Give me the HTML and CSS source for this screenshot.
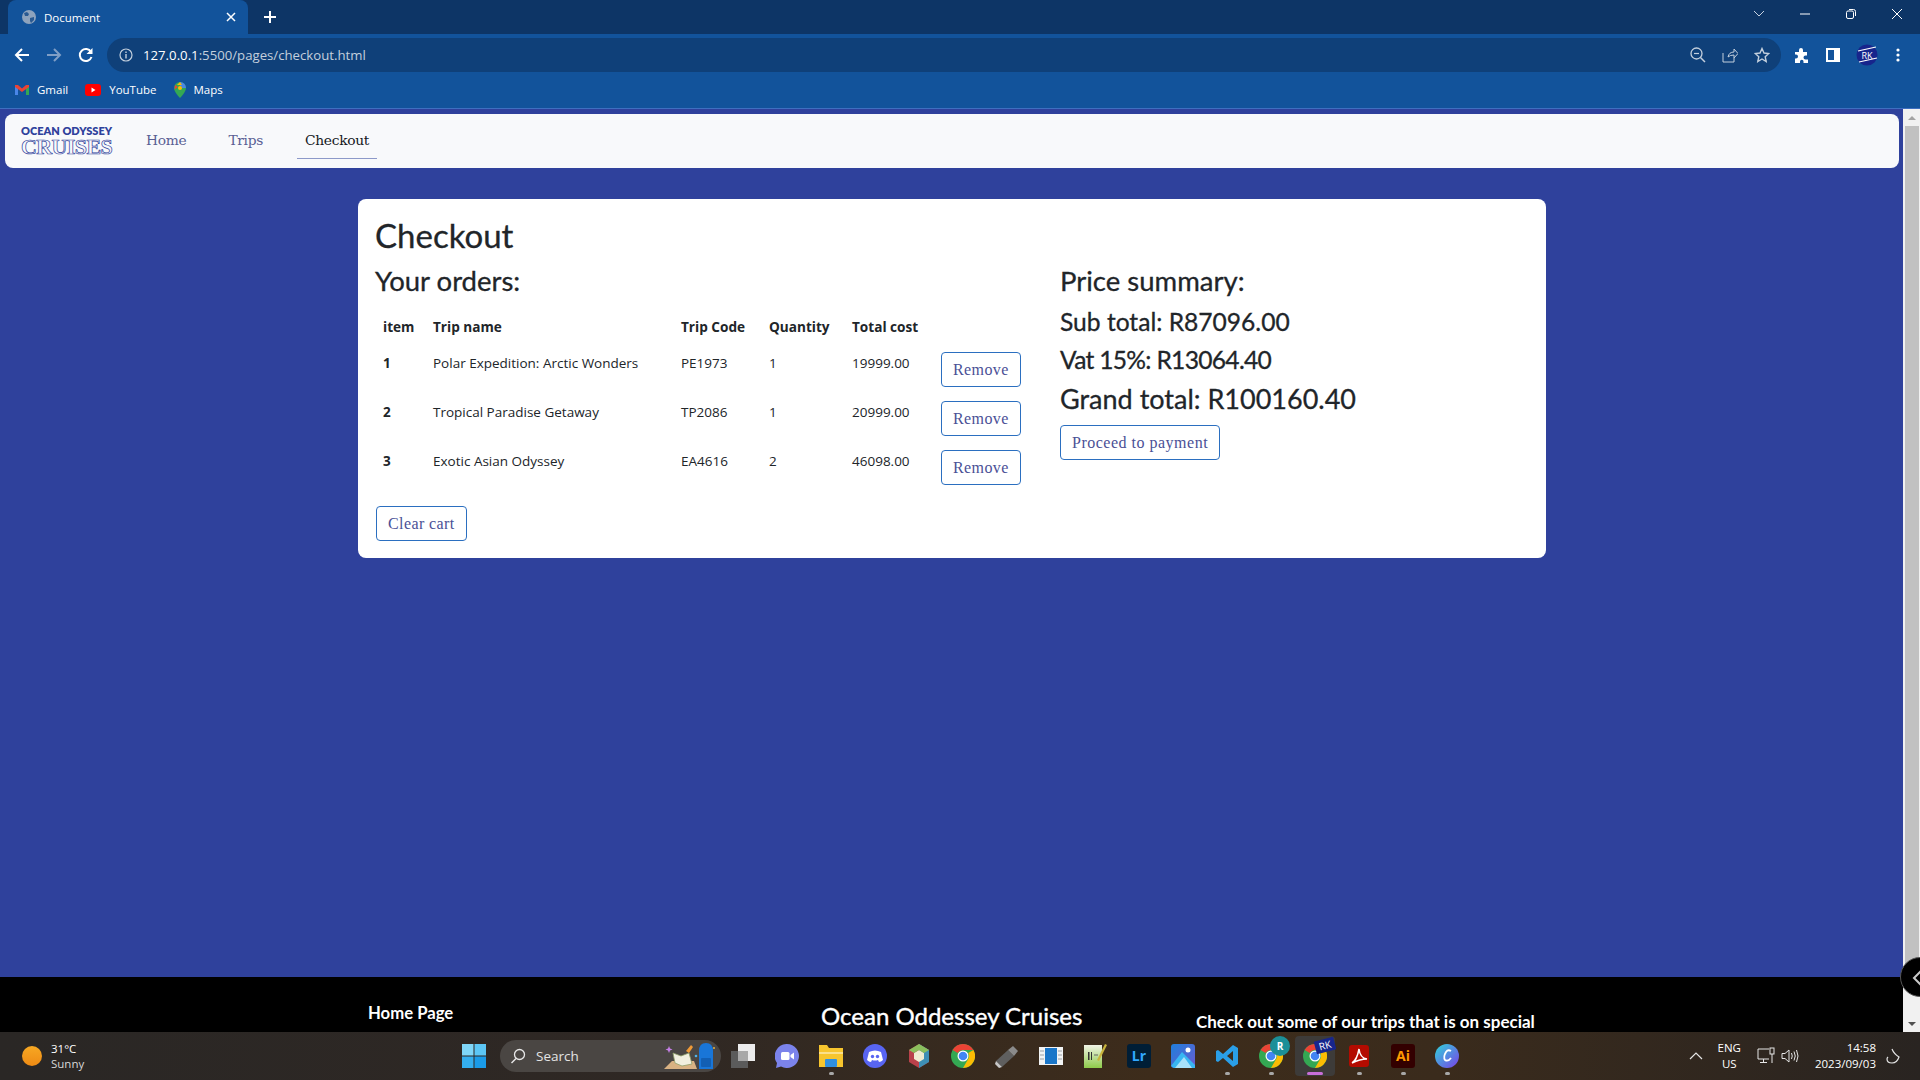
FILE: index.html
```html
<!DOCTYPE html>
<html lang="en">
<head>
    <meta charset="UTF-8">
    <meta name="viewport" content="width=device-width, initial-scale=1.0">
    <title>Document</title>
    <link rel="stylesheet" href="styles.css">
</head>
<body>

    <!-- browser frame -->
    <div class="tabstrip">
        <div class="tab">
            <svg class="tab-globe" width="16" height="16" viewBox="0 0 16 16"><circle cx="8" cy="8" r="7" fill="#8ea3bd"/><path d="M3 4l3-1 2 2-1 2-3 0zM9 9l4-1 0 3-3 3-1-2z" fill="#2a5a92"/></svg>
            <span class="tab-title">Document</span>
            <svg class="tab-close" width="10" height="10" viewBox="0 0 10 10"><path d="M1 1l8 8M9 1l-8 8" stroke="#fff" stroke-width="1.5"/></svg>
        </div>
        <svg class="tab-new" width="14" height="14" viewBox="0 0 14 14"><path d="M7 1v12M1 7h12" stroke="#fff" stroke-width="2"/></svg>
        <div class="win-controls">
            <svg width="12" height="8" viewBox="0 0 12 8"><path d="M1 1l5 5 5-5" fill="none" stroke="#c6d2e0" stroke-width="1"/></svg>
            <svg width="12" height="12" viewBox="0 0 12 12"><path d="M1 6h10" stroke="#fff" stroke-width="1"/></svg>
            <svg width="12" height="12" viewBox="0 0 12 12"><rect x="1.5" y="3" width="7" height="7.5" rx="1.5" fill="none" stroke="#fff"/><path d="M4 1.5h4.500q2 0 2 2v4.500" fill="none" stroke="#fff"/></svg>
            <svg width="12" height="12" viewBox="0 0 12 12"><path d="M1 1l10 10M11 1l-10 10" stroke="#fff" stroke-width="1"/></svg>
        </div>
    </div>

    <div class="toolbar">
        <svg class="nav-btn" width="16" height="16" viewBox="0 0 16 16"><path d="M15 8H2M8 2L2 8l6 6" fill="none" stroke="#fff" stroke-width="2"/></svg>
        <svg class="nav-btn" width="16" height="16" viewBox="0 0 16 16"><path d="M1 8h13M8 2l6 6-6 6" fill="none" stroke="#7f9ec6" stroke-width="2"/></svg>
        <svg class="nav-btn" width="16" height="16" viewBox="0 0 16 16"><path d="M13.500 10a6 6 0 1 1-.5-5" fill="none" stroke="#fff" stroke-width="2"/><path d="M14.500 1v6h-6z" fill="#fff"/></svg>
        <div class="omnibox">
            <svg width="14" height="14" viewBox="0 0 14 14"><circle cx="7" cy="7" r="6" fill="none" stroke="#c3cfdd" stroke-width="1.2"/><path d="M7 6v4.500M7 3.500v1.500" stroke="#c3cfdd" stroke-width="1.400"/></svg>
            <span class="url"><b>127.0.0.1</b>:5500/pages/checkout.html</span>
            <div class="omni-icons">
                <svg width="16" height="16" viewBox="0 0 16 16"><circle cx="6.500" cy="6.500" r="5.500" fill="none" stroke="#c3cfdd" stroke-width="1.300"/><path d="M10.500 10.500l4.500 4.500" stroke="#c3cfdd" stroke-width="1.500"/><path d="M4 6.500h5" stroke="#c3cfdd" stroke-width="1.200"/></svg>
                <svg width="16" height="16" viewBox="0 0 16 16"><path d="M1 6v9h11v-4M6 10q1-5 6-5V2l4 4.500L12 11V8q-4 0-6 2z" fill="none" stroke="#c3cfdd" stroke-width="1"/></svg>
                <svg width="16" height="16" viewBox="0 0 16 16"><path d="M8 1.500l2 4.500 4.800.5-3.600 3.200 1 4.800L8 12l-4.200 2.500 1-4.800L1.200 6.500 6 6z" fill="none" stroke="#c3cfdd" stroke-width="1.400"/></svg>
            </div>
        </div>
        <div class="toolbar-end">
            <svg width="16" height="16" viewBox="0 0 16 16"><path d="M1 5h4V3a2 2 0 0 1 4 0v2h4v3.500h-1.500a2 2 0 0 0 0 4H14V16H9.500v-1.500a1.700 1.700 0 0 0-3.500 0V16H1v-4.500h1a2 2 0 0 0 0-4H1z" fill="#fff"/></svg>
            <svg width="14" height="14" viewBox="0 0 14 14"><path d="M0 0h14v14H0zM2 2v10h6V2z" fill="#fff" fill-rule="evenodd"/></svg>
            <svg width="22" height="22" viewBox="0 0 22 22"><circle cx="11" cy="11" r="10.500" fill="#17258c"/><path d="M2 7l18-4M3 18l18-4" stroke="#fff" stroke-width="1.200"/><text x="11" y="15" text-anchor="middle" class="avatar-text">RK</text></svg>
            <svg class="menu-dots" width="4" height="14" viewBox="0 0 4 14"><circle cx="2" cy="2" r="1.600" fill="#fff"/><circle cx="2" cy="7" r="1.600" fill="#fff"/><circle cx="2" cy="12" r="1.600" fill="#fff"/></svg>
        </div>
    </div>

    <div class="bookmarks">
        <a class="bookmark">
            <svg width="14" height="11" viewBox="0 0 14 11"><path d="M0 1v10h3V4z" fill="#4a86e8"/><path d="M14 1v10h-3V4z" fill="#34a853"/><path d="M0 1l3 0 4 3.500L11 1l3 0 0 2-7 5-7-5z" fill="#ea4335"/></svg>
            Gmail
        </a>
        <a class="bookmark">
            <svg width="16" height="12" viewBox="0 0 16 12"><rect width="16" height="12" rx="3" fill="#f00"/><path d="M6.500 3.500v5l4-2.500z" fill="#fff"/></svg>
            YouTube
        </a>
        <a class="bookmark">
            <svg width="12" height="16" viewBox="0 0 12 16"><path d="M6 0a6 6 0 0 1 6 6c0 4-6 10-6 10S0 10 0 6a6 6 0 0 1 6-6z" fill="#34a853"/><path d="M6 0a6 6 0 0 1 6 6L8 6a2 2 0 0 0-2-2z" fill="#4a86e8"/><path d="M1 3l3 2-3.500 2.500z" fill="#ea4335"/><path d="M6 0L8 3 3 3z" fill="#fbbc04"/><circle cx="6" cy="6" r="2" fill="#fbbc04"/></svg>
            Maps
        </a>
    </div>

    <!-- page -->
    <div class="viewport">
        <div class="page">
            <nav class="navbar">
                <div class="logo">
                    <span class="logo-top">OCEAN ODYSSEY</span>
                    <span class="logo-bottom">CRUISES</span>
                </div>
                <a class="nav-link">Home</a>
                <a class="nav-link">Trips</a>
                <a class="nav-link active">Checkout</a>
            </nav>

            <main class="main">
                <section class="card">
                    <h1>Checkout</h1>
                    <div class="card-cols">
                        <div class="orders">
                            <h2>Your orders:</h2>
                            <table>
                                <thead>
                                    <tr>
                                        <th class="col-item">item</th>
                                        <th class="col-name">Trip name</th>
                                        <th class="col-code">Trip Code</th>
                                        <th class="col-qty">Quantity</th>
                                        <th class="col-total">Total cost</th>
                                        <th></th>
                                    </tr>
                                </thead>
                                <tbody>
                                    <tr>
                                        <th>1</th>
                                        <td>Polar Expedition: Arctic Wonders</td>
                                        <td>PE1973</td>
                                        <td>1</td>
                                        <td>19999.00</td>
                                        <td><button class="btn">Remove</button></td>
                                    </tr>
                                    <tr>
                                        <th>2</th>
                                        <td>Tropical Paradise Getaway</td>
                                        <td>TP2086</td>
                                        <td>1</td>
                                        <td>20999.00</td>
                                        <td><button class="btn">Remove</button></td>
                                    </tr>
                                    <tr>
                                        <th>3</th>
                                        <td>Exotic Asian Odyssey</td>
                                        <td>EA4616</td>
                                        <td>2</td>
                                        <td>46098.00</td>
                                        <td><button class="btn">Remove</button></td>
                                    </tr>
                                </tbody>
                            </table>
                            <button class="btn btn-clear">Clear cart</button>
                        </div>
                        <div class="summary">
                            <h2>Price summary:</h2>
                            <p class="sum-line">Sub total: R87096.00</p>
                            <p class="sum-line vat">Vat 15%: R13064.40</p>
                            <p class="sum-line grand">Grand total: R100160.40</p>
                            <button class="btn">Proceed to payment</button>
                        </div>
                    </div>
                </section>
            </main>

            <footer class="footer">
                <div class="foot-left">Home Page</div>
                <div class="foot-mid">Ocean Oddessey Cruises</div>
                <div class="foot-right">Check out some of our trips that is on special</div>
            </footer>
        </div>
        <div class="scrollbar">
            <span class="arrow-up"></span>
            <div class="thumb"></div>
            <span class="arrow-down"></span>
        </div>
        <div class="edge-tab">
            <svg width="10" height="16" viewBox="0 0 10 16"><path d="M9 1L2 8l7 7" fill="none" stroke="#c9c9c9" stroke-width="2"/></svg>
        </div>
    </div>

    <!-- windows taskbar -->
    <div class="taskbar">
        <div class="weather">
            <span class="sun"></span>
            <div class="weather-text">
                <span>31°C</span>
                <span class="dim">Sunny</span>
            </div>
        </div>
        <div class="task-center">
            <svg class="start" width="24" height="24" viewBox="0 0 24 24"><rect width="11.500" height="11.500" fill="#7fd6f8"/><rect x="12.500" width="11.500" height="11.500" fill="#5cc6f5"/><rect y="12.500" width="11.500" height="11.500" fill="#34aeee"/><rect x="12.500" y="12.500" width="11.500" height="11.500" fill="#1a9be8"/></svg>
            <div class="search">
                <svg width="16" height="16" viewBox="0 0 16 16"><circle cx="9.500" cy="6.500" r="5" fill="none" stroke="#e8e8e8" stroke-width="1.300"/><path d="M6 10.500L1.500 15" stroke="#e8e8e8" stroke-width="1.500"/></svg>
                <span>Search</span>
                <svg class="search-art" width="52" height="30" viewBox="0 0 52 30"><path d="M6 5l1 2.500 2.500 1-2.500 1-1 2.500-1-2.500-2.500-1 2.500-1z" fill="#c780e8"/><path d="M1 28l8-8 22 0 3 8z" fill="#d9b283"/><path d="M10 12l8 3 8-3 3 11-10 2-7-3z" fill="#f1efdf" stroke="#8fa06a" stroke-width=".8"/><path d="M23 10l5-6 2 2-4 6z" fill="#ef9a38"/><circle cx="33" cy="15" r="1.300" fill="#4fb3e8"/><path d="M36 28V10q0-8 7-8t7 8v18z" fill="#1976d8"/><rect x="38" y="17" width="10" height="9" rx="1" fill="#125fb4"/><circle cx="51" cy="7" r="1" fill="#e9b13c"/></svg>
            </div>
            <div class="task-icon"><svg width="24" height="24" viewBox="0 0 24 24"><rect x="0" y="7" width="17" height="17" fill="#5b5b5b"/><rect x="7" y="0" width="17" height="17" fill="#ececec"/><rect x="7" y="7" width="10" height="10" fill="#a8a8a8"/></svg></div>
            <div class="task-icon"><svg width="24" height="24" viewBox="0 0 24 24"><path d="M12 0a12 12 0 1 1-6 22.400L1 24l1-5A12 12 0 0 1 12 0z" fill="#7b83eb"/><rect x="6" y="8" width="8.500" height="8" rx="1.500" fill="#fff"/><path d="M15.500 11l3.500-2.500v7L15.500 13z" fill="#fff"/></svg></div>
            <div class="task-icon running"><svg width="24" height="24" viewBox="0 0 24 24"><path d="M0 1h8l2 3h14v19H0z" fill="#f7c52e"/><rect y="8" width="24" height="2" fill="#fbe08a"/><rect x="6" y="15" width="12" height="8" rx="1" fill="#2f8fe0"/></svg></div>
            <div class="task-icon"><svg width="24" height="24" viewBox="0 0 24 24"><circle cx="12" cy="12" r="12" fill="#5865f2"/><path d="M6 8q6-3 12 0l2 8q-2 2-4 2l-1-2q-3 1-6 0l-1 2q-2 0-4-2z" fill="#fff"/><circle cx="9.500" cy="12.500" r="1.700" fill="#5865f2"/><circle cx="14.500" cy="12.500" r="1.700" fill="#5865f2"/></svg></div>
            <div class="task-icon"><svg width="24" height="26" viewBox="0 0 24 26"><path d="M12 1l10 6v12l-10 6-10-6V7z" fill="#b9414a"/><path d="M12 1l10 6v12l-10 6z" fill="#3d8fb5"/><path d="M12 7l5 3v6l-5 3-5-3v-6z" fill="#efecd0"/><path d="M12 1l10 6-5 3-5-3-5 3-5-3z" fill="#8bbf5c"/></svg></div>
            <div class="task-icon"><svg width="24" height="24" viewBox="0 0 24 24"><use href="#chrome"/></svg></div>
            <div class="task-icon"><svg width="24" height="24" viewBox="0 0 24 24"><path d="M1 17L13 6l6 6L7 23z" fill="#5f5f5f"/><path d="M13 6l5-4 5 5-4 5z" fill="#8a8a8a"/><path d="M1 17l6 6-3 1-4-4z" fill="#c8c8c8"/></svg></div>
            <div class="task-icon"><svg width="24" height="24" viewBox="0 0 24 24"><rect y="3" width="24" height="18" fill="#f1f3f4"/><rect x="6" y="4" width="12" height="16" fill="#1976c9"/><path d="M1 7h4M1 11h4M1 15h4M19 7h4M19 11h4M19 15h4" stroke="#9aa0a6"/></svg></div>
            <div class="task-icon"><svg width="24" height="26" viewBox="0 0 24 26"><defs><linearGradient id="note" x1="0" y1="0" x2="0" y2="1"><stop offset="0" stop-color="#f1f3e6"/><stop offset="1" stop-color="#8ecb4a"/></linearGradient></defs><rect x="1" y="2" width="18" height="23" fill="url(#note)"/><path d="M5 9h1.500v8H5zM8 9h1v8H8z" fill="#333"/><path d="M11 12h4" stroke="#666"/><path d="M14 17L22 1l2 1-8 16z" fill="#c9b43c"/></svg></div>
            <div class="task-icon"><svg width="24" height="24" viewBox="0 0 24 24"><rect width="24" height="24" rx="3" fill="#001e36"/><text x="12" y="17" text-anchor="middle" class="lr-text">Lr</text></svg></div>
            <div class="task-icon"><svg width="24" height="24" viewBox="0 0 24 24"><defs><linearGradient id="photo" x1="0" y1="0" x2="1" y2="1"><stop offset="0" stop-color="#1f7fdc"/><stop offset="1" stop-color="#6a5bd0"/></linearGradient></defs><rect width="24" height="24" rx="3" fill="url(#photo)"/><path d="M0 22L11 8l13 13v3H3z" fill="#38b6f2"/><path d="M4 24l9-11 8 11z" fill="#a8e2fa"/><circle cx="17" cy="6" r="2.500" fill="#fff"/></svg></div>
            <div class="task-icon running"><svg width="24" height="24" viewBox="0 0 24 24"><path d="M18 1l5 3v16l-5 3-10-9-5 4-2-1V7l2-1 5 4zM18 7l-6 5 6 5z" fill="#2a9fe8"/></svg></div>
            <div class="task-icon running">
                <svg width="24" height="24" viewBox="0 0 24 24"><use href="#chrome"/></svg>
                <span class="task-badge">R</span>
            </div>
            <div class="task-icon active">
                <svg width="24" height="24" viewBox="0 0 24 24"><use href="#chrome"/></svg>
                <span class="task-badge rk">RK</span>
            </div>
            <div class="task-icon running"><svg width="24" height="24" viewBox="0 0 24 24"><rect x="2" y="1" width="20" height="22" rx="3" fill="#b30b00"/><path d="M5 19q5-3 7-14 1 9 8 10-7 0-15 4z" fill="none" stroke="#fff" stroke-width="1.500"/></svg></div>
            <div class="task-icon running"><svg width="24" height="24" viewBox="0 0 24 24"><rect width="24" height="24" rx="3" fill="#330000"/><text x="12" y="17" text-anchor="middle" class="ai-text">Ai</text></svg></div>
            <div class="task-icon running"><svg width="24" height="24" viewBox="0 0 24 24"><defs><linearGradient id="canva" x1="0" y1="0" x2="1" y2="1"><stop offset="0" stop-color="#2fd4d9"/><stop offset="1" stop-color="#7a3fe8"/></linearGradient></defs><circle cx="12" cy="12" r="12" fill="url(#canva)"/><path d="M16 7q-3-2-5 1-3 5-1 8 3 2 6-2" fill="none" stroke="#fff" stroke-width="1.800"/></svg></div>
        </div>
        <div class="tray">
            <svg class="tray-chevron" width="14" height="8" viewBox="0 0 14 8"><path d="M1 7l6-6 6 6" fill="none" stroke="#e6e6e6" stroke-width="1.200"/></svg>
            <div class="lang"><span>ENG</span><span>US</span></div>
            <svg class="tray-net" width="18" height="18" viewBox="0 0 18 18"><path d="M12 2H1v10h11M6.500 12v3M3 15.500h7" fill="none" stroke="#e6e6e6"/><rect x="13" y="1" width="4" height="6" fill="none" stroke="#e6e6e6"/><path d="M15 7v9" stroke="#e6e6e6"/></svg>
            <svg class="tray-vol" width="18" height="16" viewBox="0 0 18 16"><path d="M1 5.500h3l4-3.500v12l-4-3.500H1zM10.500 5q1.500 3 0 6M13 3.500q2.500 4.500 0 9M15.500 2q3 6 0 12" fill="none" stroke="#e6e6e6"/></svg>
            <div class="clock"><span>14:58</span><span>2023/09/03</span></div>
            <svg class="tray-moon" width="14" height="16" viewBox="0 0 14 16"><path d="M6 1q2 5 7 8-2 6-7 6-5 0-5-4 0-1 1-2" fill="none" stroke="#e6e6e6" stroke-width="1.200"/></svg>
        </div>
    </div>

    <svg class="defs" width="0" height="0">
        <symbol id="chrome" viewBox="0 0 24 24">
            <circle cx="12" cy="12" r="12" fill="#34a853"/>
            <path d="M12 0a12 12 0 0 1 10.400 6H12a6 6 0 0 0-5.200 3L1.600 6A12 12 0 0 1 12 0z" fill="#ea4335"/>
            <path d="M22.400 6A12 12 0 0 1 12 24l5.200-9a6 6 0 0 0 0-6z" fill="#fbbc04"/>
            <circle cx="12" cy="12" r="5.500" fill="#fff"/>
            <circle cx="12" cy="12" r="4.300" fill="#4285f4"/>
        </symbol>
    </svg>

</body>
</html>
```

FILE: styles.css
```css
* {
    box-sizing: border-box;
}

html, body {
    margin: 0;
    height: 100%;
    overflow: hidden;
}

body {
    display: flex;
    flex-direction: column;
    width: 1920px;
    height: 1080px;
    font-family: "Open Sans", Arial, sans-serif;
    background: #2f419c;
}

/* browser frame */
.tabstrip {
    height: 34px;
    flex: none;
    display: flex;
    align-items: flex-end;
    padding-left: 8px;
    background: #0d3566;
    position: relative;
}

.tab {
    width: 240px;
    height: 34px;
    display: flex;
    align-items: center;
    padding: 0 12px 0 13px;
    background: #12539b;
    border-radius: 8px 8px 0 0;
    color: #fff;
    font: 11.500px "Open Sans", Arial, sans-serif;
}

.tab-title {
    margin-left: 7px;
    flex: 1;
}

.tab-new {
    margin: 0 0 10px 15px;
}

.win-controls {
    margin-left: auto;
    height: 34px;
    display: flex;
    align-items: center;
    gap: 34px;
    padding: 0 17px 6px 0;
}

.toolbar {
    height: 38px;
    flex: none;
    display: flex;
    align-items: center;
    background: #12539b;
    padding: 4px 0 0 14px;
}

.nav-btn {
    margin-right: 16px;
}

.omnibox {
    width: 1674px;
    height: 34px;
    margin-left: -3px;
    border-radius: 17px;
    background: #0f4079;
    display: flex;
    align-items: center;
    padding: 0 11px 0 12px;
    color: #c3cfdd;
    font: 13.200px "Open Sans", Arial, sans-serif;
}

.url {
    margin-left: 10px;
}

.url b {
    font-weight: 400;
    color: #fff;
}

.omni-icons {
    margin-left: auto;
    display: flex;
    align-items: center;
    gap: 16px;
}

.toolbar-end {
    display: flex;
    align-items: center;
    margin-left: 13px;
    gap: 16px;
}

.menu-dots {
    margin-left: 2px;
}

.avatar-text {
    font: 9px "Open Sans", Arial, sans-serif;
    fill: #fff;
}

.bookmarks {
    height: 37px;
    flex: none;
    display: flex;
    align-items: center;
    gap: 17px;
    padding: 0 0 1px 15px;
    background: #12539b;
    border-bottom: 1px solid #3f6fc0;
}

.bookmark {
    display: flex;
    align-items: center;
    gap: 8px;
    color: #fff;
    font: 11.500px "Open Sans", Arial, sans-serif;
}

/* page */
.viewport {
    flex: 1;
    min-height: 0;
    display: flex;
    position: relative;
}

.page {
    flex: 1;
    display: flex;
    flex-direction: column;
    position: relative;
    background: #2f419c;
    overflow: hidden;
}

.navbar {
    height: 54px;
    margin: 5px 4px 0 5px;
    display: flex;
    align-items: stretch;
    background: #f8f9fb;
    border-radius: 8px;
    padding-left: 16px;
    flex: none;
}

.logo {
    width: 90px;
    display: flex;
    flex-direction: column;
    justify-content: center;
    color: #2f419c;
    margin-right: 14px;
}

.logo-top {
    font: 800 11px/12px Lato, Arial, sans-serif;
    white-space: nowrap;
}

.logo-bottom {
    font: 700 22px/20px "Liberation Serif", serif;
    color: #f8f9fb;
    -webkit-text-stroke: 0.7px #2f419c;
    letter-spacing: -0.6px;
    white-space: nowrap;
}

.nav-link {
    padding: 16px 8px 0;
    margin: 0 13px 9px;
    font: 13.800px/20px "DejaVu Serif", serif;
    color: #5a5f94;
    letter-spacing: -0.3px;
}

.nav-link.active {
    color: #16181d;
    border-bottom: 1px solid #8d99c9;
}

.main {
    flex: 1;
    display: flex;
    justify-content: center;
    padding: 31px 0 0 0;
}

.card {
    width: 1188px;
    height: 359px;
    margin-left: 1px;
    background: #fff;
    border-radius: 8px;
    padding: 16px 17px;
}

h1 {
    margin: 0;
    font: 400 33px/40px Lato, Arial, sans-serif;
    color: #212529;
    -webkit-text-stroke: 0.3px #212529;
}

h2 {
    margin: 0;
    font: 400 27.500px/34px Lato, Arial, sans-serif;
    color: #212529;
    -webkit-text-stroke: 0.3px #212529;
}

.card-cols {
    display: flex;
    margin-top: 9px;
}

.orders {
    width: 685px;
}

table {
    table-layout: fixed;
    width: 653px;
    border-collapse: collapse;
    margin-top: 11px;
    margin-bottom: 17px;
    color: #212529;
    font-size: 13.500px;
}

th, td {
    text-align: left;
    vertical-align: top;
    line-height: 20px;
}

thead th {
    padding: 8px 8px 5px;
    font-size: 13.600px;
}

th {
    font-weight: 700;
}

tbody th, tbody td {
    padding: 11px 8px 3px;
}

tbody tr {
    height: 49px;
}

.col-item { width: 50px; }
.col-name { width: 248px; }
.col-code { width: 88px; }
.col-qty { width: 83px; }
.col-total { width: 89px; }

.btn {
    height: 35px;
    padding: 0 11px;
    background: #fff;
    border: 1px solid #2b6fc0;
    border-radius: 4px;
    color: #4a5096;
    font: 16px "Liberation Serif", serif;
    letter-spacing: 0.4px;
    white-space: nowrap;
}

td .btn {
    display: block;
    margin-top: -1px;
}

.btn-clear {
    display: block;
    margin-left: 1px;
}

.summary {
    flex: 1;
}

.summary h2 {
    margin-bottom: 7px;
}

.summary .btn {
    letter-spacing: 0.5px;
}

.sum-line {
    margin: 4px 0 0;
    font: 400 24.600px/34px Lato, Arial, sans-serif;
    color: #212529;
    -webkit-text-stroke: 0.3px #212529;
}

.sum-line.vat {
    letter-spacing: -0.7px;
}

.sum-line.grand {
    font-size: 27px;
    line-height: 36px;
    margin-bottom: 8px;
}

.footer {
    position: absolute;
    left: 0;
    right: 0;
    top: 868px;
    height: 55px;
    background: #000;
    color: #fff;
    font-family: Lato, Arial, sans-serif;
}

.foot-left {
    position: absolute;
    left: 368px;
    top: 26px;
    font-size: 16.700px;
    font-weight: 700;
}

.foot-mid {
    position: absolute;
    left: 821px;
    top: 24px;
    font-size: 24px;
    -webkit-text-stroke: 0.4px #fff;
}

.foot-right {
    position: absolute;
    left: 1196px;
    top: 34px;
    font-size: 17px;
    font-weight: 700;
    white-space: nowrap;
}

.edge-tab {
    position: absolute;
    right: -20px;
    top: 848px;
    width: 40px;
    height: 40px;
    background: #000;
    border: 1px solid #555;
    border-radius: 50%;
    padding: 11px 0 0 11px;
}

.scrollbar {
    width: 17px;
    flex: none;
    display: flex;
    flex-direction: column;
    align-items: center;
    background: #f1f1f1;
}

.arrow-up, .arrow-down {
    width: 0;
    height: 0;
    border-left: 4px solid transparent;
    border-right: 4px solid transparent;
    margin: 7px 0 6px;
}

.arrow-up {
    border-bottom: 4px solid #a3a3a3;
}

.arrow-down {
    border-top: 4px solid #505050;
    margin-top: auto;
}

.thumb {
    width: 14px;
    height: 847px;
    background: #c1c1c1;
    flex: none;
}

/* taskbar */
.taskbar {
    height: 48px;
    flex: none;
    display: flex;
    align-items: center;
    position: relative;
    color: #fff;
    background: linear-gradient(90deg, #2a2725 0%, #2f2824 35%, #3d2c1b 60%, #3a2b1c 75%, #292421 100%);
}

.weather {
    display: flex;
    align-items: center;
    gap: 9px;
    padding-left: 22px;
    font: 11.500px/15px "Open Sans", Arial, sans-serif;
}

.sun {
    width: 20px;
    height: 20px;
    border-radius: 50%;
    background: linear-gradient(180deg, #f7a823, #ee8a14);
}

.weather-text {
    display: flex;
    flex-direction: column;
}

.dim {
    color: #d8d8d8;
}

.task-center {
    position: absolute;
    left: 452px;
    top: 0;
    height: 48px;
    display: flex;
    align-items: center;
}

.start {
    margin-left: 10px;
}

.search {
    width: 221px;
    height: 32px;
    margin-left: 14px;
    border-radius: 16px;
    background: #4a4643;
    display: flex;
    align-items: center;
    gap: 10px;
    padding-left: 10px;
    color: #e4e4e4;
    font: 13.500px "Open Sans", Arial, sans-serif;
    position: relative;
}

.search-art {
    position: absolute;
    right: 6px;
    top: 1px;
}

.task-icon {
    width: 44px;
    height: 44px;
    display: flex;
    align-items: center;
    justify-content: center;
    position: relative;
}

.task-icon svg {
    position: relative;
}

.task-icon.running::after,
.task-icon.active::after {
    content: "";
    position: absolute;
    left: 50%;
    bottom: 3px;
    width: 5px;
    height: 3px;
    margin-left: -2px;
    border-radius: 2px;
    background: #a8a8a8;
}

.task-icon.active::before {
    content: "";
    position: absolute;
    inset: 2px;
    background: #3d3b39;
    border-radius: 4px;
}

.task-icon.active::after {
    width: 16px;
    margin-left: -8px;
    background: #c86fd8;
}

.task-badge {
    position: absolute;
    right: 3px;
    top: 2px;
    width: 20px;
    height: 20px;
    border-radius: 50%;
    background: #1b8f98;
    font: 700 10px/20px "Open Sans", Arial, sans-serif;
    text-align: center;
}

.task-badge.rk {
    right: 2px;
    top: 5px;
    height: 13px;
    border-radius: 1px;
    background: #17258c;
    transform: rotate(-15deg);
    font: 10px/13px "Open Sans", Arial, sans-serif;
}

.lr-text {
    font: 700 14px "Open Sans", Arial, sans-serif;
    fill: #31a8ff;
}

.ai-text {
    font: 700 14px "Open Sans", Arial, sans-serif;
    fill: #ff9a00;
}

.tray {
    margin-left: auto;
    height: 48px;
    display: flex;
    align-items: center;
    padding-right: 20px;
    font: 11.500px/16px "Open Sans", Arial, sans-serif;
}

.lang {
    margin-left: 15px;
}

.tray-net {
    margin-left: 16px;
}

.tray-vol {
    margin-left: 6px;
}

.clock {
    margin-left: 16px;
    align-items: flex-end;
}

.tray-moon {
    margin-left: 10px;
}

.lang, .clock {
    display: flex;
    flex-direction: column;
    align-items: center;
}

.clock {
    align-items: flex-end;
}

.defs {
    position: absolute;
}
```
